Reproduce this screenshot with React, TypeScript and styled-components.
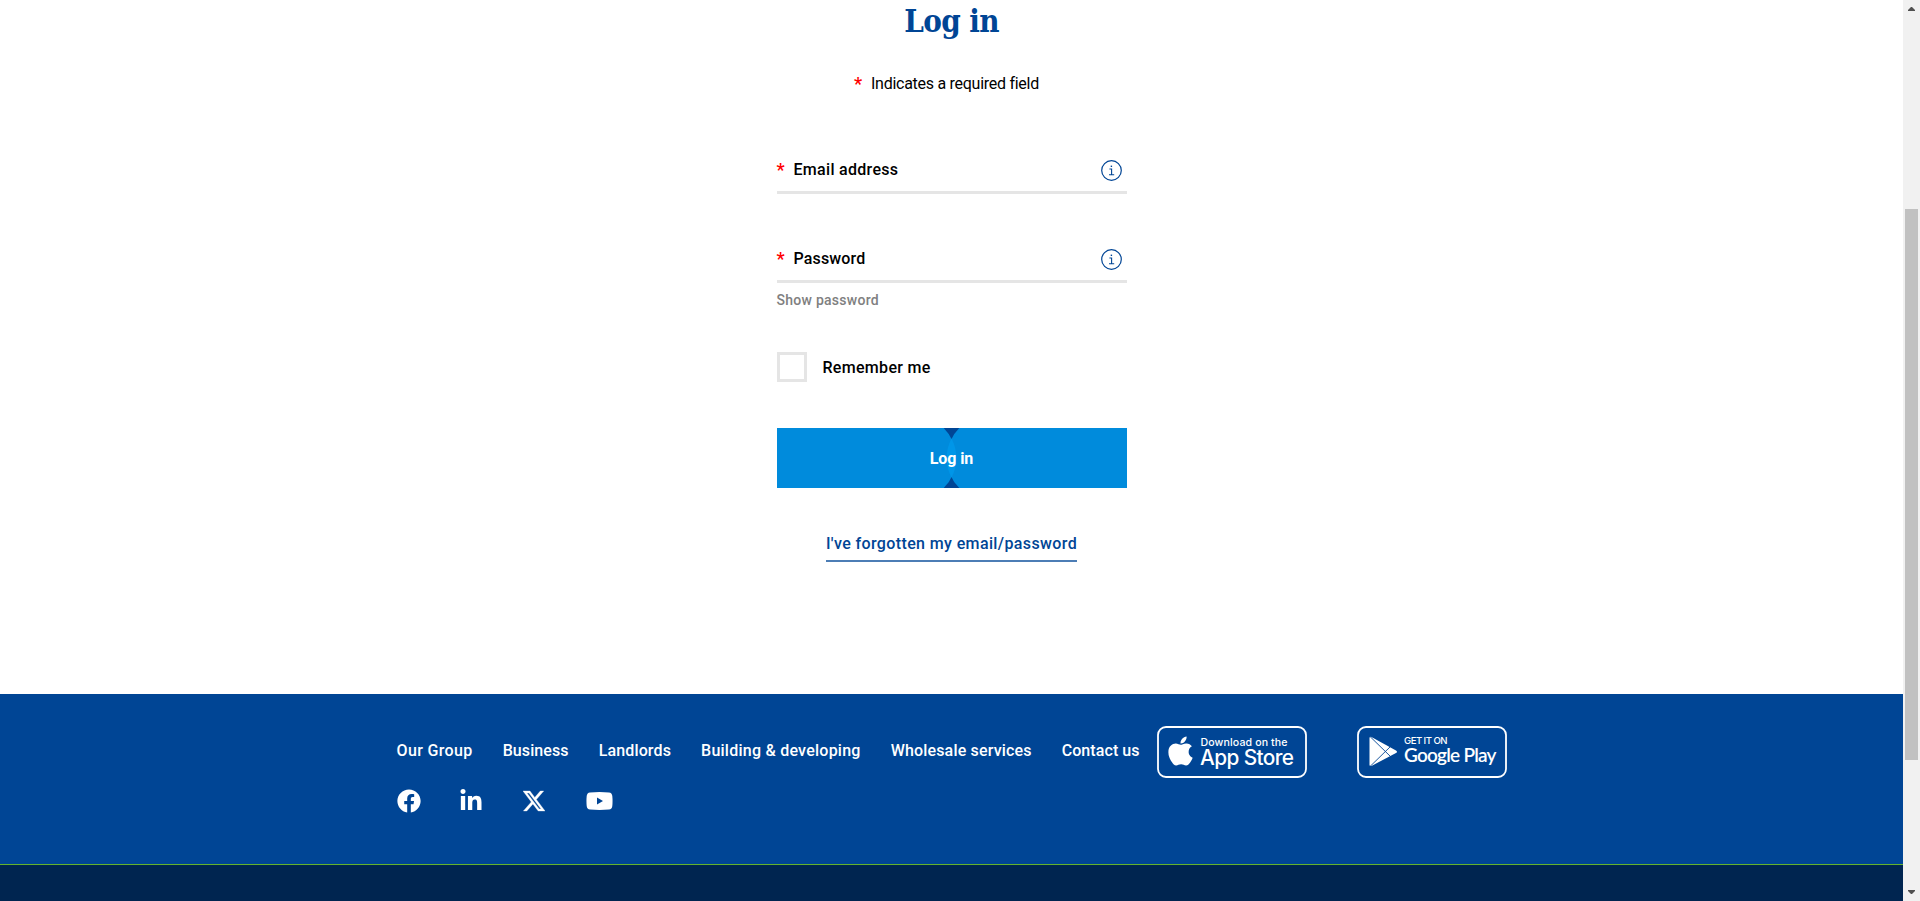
import React from 'react';
import styled, { createGlobalStyle } from 'styled-components';
import { FaApple, FaFacebook, FaLinkedinIn } from 'react-icons/fa';

const BLUE = '#004595';

const Global = createGlobalStyle`
  * { box-sizing: border-box; }
  body { margin: 0; background: #fff; color: #000; overflow: hidden;
    font: 500 16px/20px Roboto, "Liberation Sans", sans-serif; }
`;

const Shell = styled.div`display: flex; height: 901px; overflow: hidden;`;
const Page = styled.div`flex: 1; display: flex; flex-direction: column; min-width: 0;`;
const Main = styled.main`
  height: 694px; flex: none;
  display: flex; flex-direction: column; align-items: center;
`;
const Title = styled.h1`
  margin: 0; color: ${BLUE}; letter-spacing: -0.6px;
  font: bold 31px/42px "DejaVu Serif Condensed", "DejaVu Serif", serif;
`;
const Required = styled.p`
  margin: 32px 0 55px; padding-right: 10px;
  display: flex; align-items: center; gap: 9px; height: 20px;
  font-weight: 400; letter-spacing: -0.27px;
`;
const Star = styled.span`color: #f00; font-weight: 600; font-size: 18px; width: 8px; letter-spacing: 0;`;
const Form = styled.form`width: 350px; display: flex; flex-direction: column;`;
const Tracked = styled.span<{ $track: number }>`letter-spacing: ${(p) => p.$track}px; white-space: nowrap;`;
const Field = styled.label<{ $gap?: number }>`
  display: flex; align-items: center; gap: 9px;
  height: 45px; padding-right: 5px; margin-top: ${(p) => p.$gap ?? 0}px;
  border-bottom: 3px solid #e5e5e5;
`;
const InfoSvg = styled.svg`margin-left: auto; display: block;`;
const ShowPassword = styled.span`
  margin-top: 7px; color: #808080; font-size: 14px; letter-spacing: 0.27px;
`;
const Remember = styled.label`
  margin-top: 42px; display: flex; align-items: center; gap: 16px;
  > span:last-child { padding-top: 2px; }
`;
const Box = styled.span`width: 30px; height: 30px; border: 3px solid #e5e5e5;`;
const Submit = styled.button`
  position: relative; margin: 46px 0 0; padding: 2px 0 0; border: 0; height: 60px;
  background: ${BLUE}; color: #fff; font: 700 16px/20px Roboto, sans-serif;
`;
const Backdrop = styled.svg`position: absolute; inset: 0;`;
const SubmitText = styled.span`position: relative; letter-spacing: -0.1px;`;
const Forgot = styled.a`
  align-self: center; margin-top: 46px; padding-bottom: 6px; color: ${BLUE};
  border-bottom: 2px solid #4c7db5; letter-spacing: 0.38px; white-space: nowrap;
`;
const Footer = styled.footer`
  height: 171px; flex: none; padding: 32px 0 0 396px; display: flex;
  background: ${BLUE}; border-bottom: 1px solid #64b32c;
`;
const FooterLeft = styled.div`width: 761px; padding-top: 15px;`;
const Nav = styled.nav`display: flex; gap: 30px; color: #fff; padding-left: 0.6px;`;
const Social = styled.div`
  display: flex; align-items: center; margin-top: 28px; height: 24px; color: #fff; padding-left: 0.5px;
  svg { display: block; }
`;
const SocialLink = styled.a<{ $w: number }>`width: ${(p) => p.$w}px;`;
const Badges = styled.div`display: flex; align-items: flex-start; gap: 50px;`;
const Bottom = styled.div`flex: 1; background: #002550;`;

const Track = styled.div`
  width: 17px; background: #f1f1f1; display: flex; flex-direction: column; align-items: center;
`;
const Thumb = styled.div`width: 13px; height: 551px; background: #c1c1c1; margin: 198px 2px 130px;`;
const Arrow = styled.svg`display: block; flex: none;`;

const Info = () => (
  <InfoSvg width="21" height="21" viewBox="0 0 21 21" fill="none" stroke={BLUE}>
    <circle cx="10.5" cy="10.5" r="9.8" strokeWidth="1.2" />
    <path d="M8.4 9H10.6V14.6M8 14.7H13.2" strokeWidth="1.1" />
    <rect x="9.7" y="5.6" width="1.4" height="1.4" fill={BLUE} stroke="none" />
  </InfoSvg>
);

const AppStore = () => (
  <svg width="150" height="52" viewBox="0 0 150 52" fill="#fff">
    <rect x="1" y="1" width="148" height="50" rx="8" fill="none" stroke="#fff" strokeWidth="1.8" />
    <FaApple x="7" y="8.5" size={33} color="#fff" />
    <text x="43.5" y="19.5" fontFamily="Inter, sans-serif" fontSize="10.6" fontWeight="500" textLength="87">Download on the</text>
    <text x="43" y="38.6" fontFamily="Inter, sans-serif" fontSize="20.8" fontWeight="500" textLength="94">App Store</text>
  </svg>
);

const GooglePlay = () => (
  <svg width="150" height="52" viewBox="0 0 150 52" fill="#fff">
    <rect x="1" y="1" width="148" height="50" rx="8" fill="none" stroke="#fff" strokeWidth="1.8" />
    <path d="M12.5 12Q12.7 10.4 14.4 10.9L39 24.4Q41 25.7 39 27L14.4 40Q12.6 40.4 12.5 39Z" />
    <path d="M13 10.5L33.5 30.5M13 40.5L33.5 20.5" stroke={BLUE} strokeWidth="0.9" fill="none" />
    <text x="47" y="18" fontFamily="Inter, sans-serif" fontSize="9.6" fontWeight="500" textLength="43.5">GET IT ON</text>
    <text x="47" y="36.2" fontFamily="Lato, sans-serif" fontSize="19" fontWeight="600" textLength="92.5">Google Play</text>
  </svg>
);

const NAV: [string, number][] = [
  ['Our Group', 0.35], ['Business', 0.1], ['Landlords', 0.14],
  ['Building & developing', 0.24], ['Wholesale services', 0.17], ['Contact us', 0.08],
];

export default function App() {
  return (
    <Shell>
      <Global />
      <Page>
        <Main>
          <Title>Log in</Title>
          <Required><Star>*</Star><span>Indicates a required field</span></Required>
          <Form>
            <Field><Star>*</Star><Tracked $track={0.3}>Email address</Tracked><Info /></Field>
            <Field $gap={44}><Star>*</Star><Tracked $track={0.15}>Password</Tracked><Info /></Field>
            <ShowPassword>Show password</ShowPassword>
            <Remember><Box /><Tracked $track={0.3}>Remember me</Tracked></Remember>
            <Submit type="button">
              <Backdrop width="350" height="60" viewBox="0 0 350 60" fill="#008bdc">
                <path d="M0 0H166.7A42 42 0 0 1 166.7 60H0Z" />
                <path d="M350 0H182.3A42 42 0 0 0 182.3 60H350Z" />
                <path fill="#0096e8" d="M174.5 10.5A42 42 0 0 1 174.5 49.5A42 42 0 0 1 174.5 10.5Z" />
              </Backdrop>
              <SubmitText>Log in</SubmitText>
            </Submit>
            <Forgot>I've forgotten my email/password</Forgot>
          </Form>
        </Main>
        <Footer>
          <FooterLeft>
            <Nav>{NAV.map(([t, track]) => <Tracked key={t} $track={track}>{t}</Tracked>)}</Nav>
            <Social>
              <SocialLink $w={62}><FaFacebook size={24} /></SocialLink>
              <SocialLink $w={64}><FaLinkedinIn size={24} /></SocialLink>
              <SocialLink $w={63}>
                <svg width="22" height="22" viewBox="0 0 24 24" fill="#fff" stroke="#fff" strokeWidth="0.4">
                  <path d="M18.901 1.153h3.68l-8.04 9.19L24 22.846h-7.406l-5.8-7.584-6.638 7.584H.474l8.6-9.83L0 1.154h7.594l5.243 6.932ZM17.61 20.644h2.039L6.486 3.24H4.298Z" />
                </svg>
              </SocialLink>
              <SocialLink $w={27}>
                <svg width="27" height="18" viewBox="0 0 27 18" fill="#fff">
                  <path fillRule="evenodd" d="M4 .4Q13.5-.4 23 .4Q26 .7 26.3 4Q26.8 9 26.3 14Q26 17.3 23 17.6Q13.5 18.4 4 17.6Q1 17.3.7 14Q.2 9 .7 4Q1 .7 4 .4ZM11 5.6V12.6L17 9.1Z" />
                </svg>
              </SocialLink>
            </Social>
          </FooterLeft>
          <Badges><AppStore /><GooglePlay /></Badges>
        </Footer>
        <Bottom />
      </Page>
      <Track>
        <Arrow width="7" height="11" viewBox="0 0 7 11" fill="#505050"><path d="M0 11V10L3 7H4L7 10V11Z" /></Arrow>
        <Thumb />
        <Arrow width="7" height="4" viewBox="0 0 7 4" fill="#505050"><path d="M0 0V1L3 4H4L7 1V0Z" /></Arrow>
      </Track>
    </Shell>
  );
}
